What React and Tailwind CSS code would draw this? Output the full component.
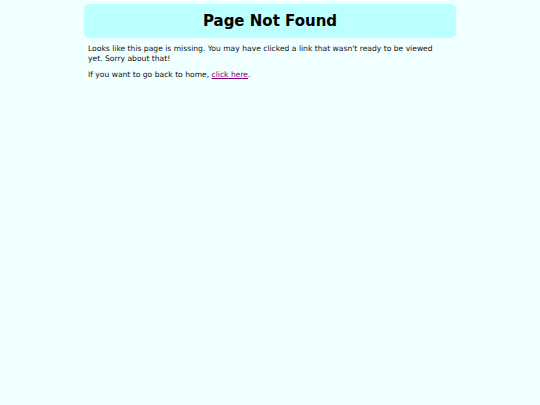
import React from "react";

const App = () => {
  return (
    <div className="min-h-screen bg-[#f0ffff] pt-[4px]">
      <div className="mx-auto w-[372px] font-['DejaVu_Sans',Verdana,sans-serif] text-black">
        <div className="bg-[#bbffff] rounded-[5px] h-[34px] flex items-center justify-center pt-[1px]">
          <h1 className="text-[15px] font-bold leading-none">Page Not Found</h1>
        </div>
        <div className="px-[4px] pt-[6px] text-[7.6px] leading-[10px] text-[#111] whitespace-nowrap">
          <p>
            Looks like this page is missing. You may have clicked a link that wasn't ready to be viewed
            <br />
            yet. Sorry about that!
          </p>
          <p className="mt-[6px]">
            If you want to go back to home,{" "}
            <a href="#" className="text-[#800080] underline">
              click here
            </a>
            .
          </p>
        </div>
      </div>
    </div>
  );
};

export default App;
